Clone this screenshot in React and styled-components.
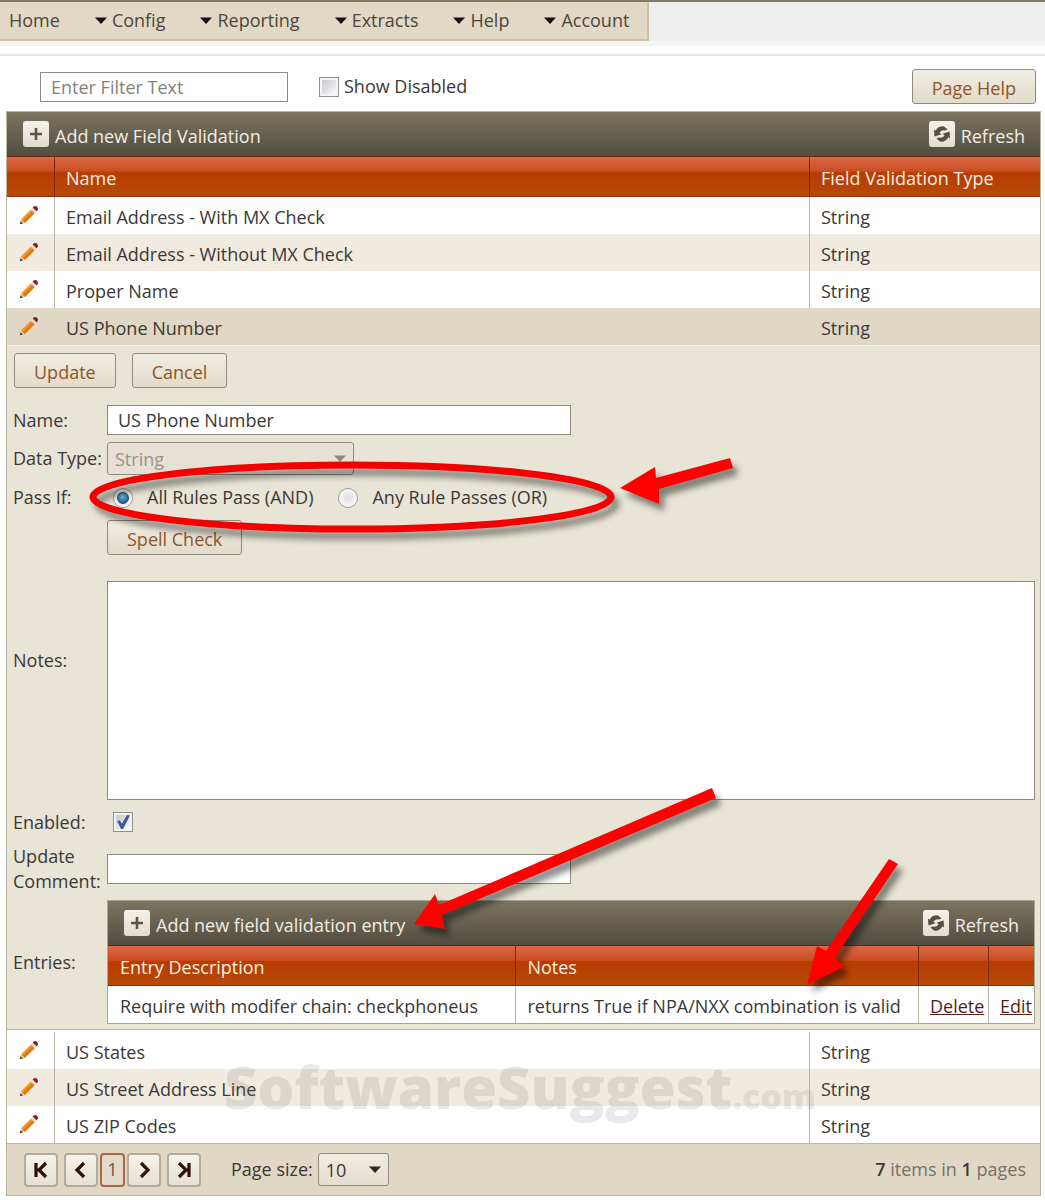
import { useState } from "react";
import styled, { createGlobalStyle } from "styled-components";

const menuItems = ["Home", "Config", "Reporting", "Extracts", "Help", "Account"];

const validations = [
  { id: 1, name: "Email Address - With MX Check", type: "String" },
  { id: 2, name: "Email Address - Without MX Check", type: "String" },
  { id: 3, name: "Proper Name", type: "String" },
  { id: 4, name: "US Phone Number", type: "String" },
  { id: 5, name: "US States", type: "String" },
  { id: 6, name: "US Street Address Line", type: "String" },
  { id: 7, name: "US ZIP Codes", type: "String" },
];

const entries = [
  {
    id: 1,
    description: "Require with modifer chain: checkphoneus",
    notes: "returns True if NPA/NXX combination is valid",
  },
];

const editedId = 4;

const CaretIcon = ({ color = "#111" }) => (
  <svg width="12" height="7" viewBox="0 0 12 7" aria-hidden="true">
    <path d="M0 0.5h12L6 7z" fill={color} />
  </svg>
);

const PencilIcon = () => (
  <svg width="20" height="20" viewBox="0 0 20 20" aria-hidden="true">
    <path d="M0.8 19.2l1.2-5 3.8 3.8z" fill="#e9cfae" />
    <path d="M0.8 19.2l0.8-3.2 2.4 2.4z" fill="#444" />
    <path d="M2 14.2L11.8 4.4l3.8 3.8L5.8 18z" fill="#f39a36" />
    <path d="M3.6 15.8L13.4 6l2.2 2.2L5.8 18z" fill="#e27a10" />
    <path d="M11.8 4.4l1.9-1.9 3.8 3.8-1.9 1.9z" fill="#ecd9d6" />
    <path d="M13.7 2.5l0.9-0.9q1.6-1.4 3.1 0l0.7 0.7q1.4 1.5 0 3.1l-0.9 0.9z" fill="#8f1a26" />
  </svg>
);

const PlusIcon = () => (
  <svg width="14" height="14" viewBox="0 0 14 14" aria-hidden="true">
    <path d="M7 1v12M1 7h12" stroke="#5a5546" strokeWidth="2.6" />
  </svg>
);

const RefreshIcon = () => (
  <svg width="18" height="18" viewBox="0 0 18 18" aria-hidden="true">
    <g fill="#544f42">
      <path d="M1 4.5l1.6 1.2Q5.5 0.6 11 1.4L14.6 4.6 12 5.6Q8.5 4 6.4 7.8L8.4 9.2 1.4 11.4z" />
      <path d="M17 13.5l-1.6-1.2Q12.5 17.4 7 16.6L3.4 13.4 6 12.4Q9.5 14 11.6 10.2L9.6 8.8 16.6 6.6z" />
    </g>
  </svg>
);

const pagerPaths = {
  first: "M4 2v14M14 2L7 9l7 7M4 9h4",
  prev: "M12 2L5 9l7 7",
  next: "M6 2l7 7-7 7",
  last: "M14 2v14M4 2l7 7-7 7M14 9h-4",
};

const PagerIcon = ({ name }) => (
  <svg width="18" height="18" viewBox="0 0 18 18" aria-hidden="true">
    <path d={pagerPaths[name]} fill="none" stroke="#2e1208" strokeWidth="3.2" />
  </svg>
);

const GridToolbar = ({ addLabel }) => (
  <Toolbar>
    <ToolbarButton type="button">
      <IconTile>
        <PlusIcon />
      </IconTile>
      {addLabel}
    </ToolbarButton>
    <ToolbarButton type="button">
      <IconTile>
        <RefreshIcon />
      </IconTile>
      Refresh
    </ToolbarButton>
  </Toolbar>
);

// Red call-outs drawn over the edit form
const Callouts = () => (
  <CalloutLayer width="910" height="684" viewBox="7 346 910 684" aria-hidden="true">
    <ellipse cx="352" cy="497" rx="259" ry="32" fill="none" stroke="#f40000" strokeWidth="7" />
    <g fill="#ff0000">
      <path d="M620 488L655 467 656 478 730 458 733 468 659 489 659 504z" />
      <path d="M414 924L435 894 439 905 712 788 716 798 442 915 445 929z" />
      <path d="M807 985L817 946 826 951 889 859 898 864 835 957 844 967z" />
    </g>
  </CalloutLayer>
);

const EntriesGrid = () => (
  <EntriesFrame>
    <GridToolbar addLabel="Add new field validation entry" />
    <Table>
      <colgroup>
        <col style={{ width: "44%" }} />
        <col />
        <col style={{ width: 70 }} />
        <col style={{ width: 46 }} />
      </colgroup>
      <thead>
        <tr>
          <HeadCell>Entry Description</HeadCell>
          <HeadCell>Notes</HeadCell>
          <HeadCell />
          <HeadCell />
        </tr>
      </thead>
      <tbody>
        {entries.map(({ id, description, notes }) => (
          <Row key={id}>
            <Cell>{description}</Cell>
            <Cell>{notes}</Cell>
            <Cell>
              <RowLink href="#delete">Delete</RowLink>
            </Cell>
            <Cell>
              <RowLink href="#edit">Edit</RowLink>
            </Cell>
          </Row>
        ))}
      </tbody>
    </Table>
  </EntriesFrame>
);

const EditForm = ({ item }) => {
  const [name, setName] = useState(item.name);
  const [passIf, setPassIf] = useState("and");
  const [notes, setNotes] = useState("");
  const [enabled, setEnabled] = useState(true);
  const [comment, setComment] = useState("");

  return (
    <Form onSubmit={(e) => e.preventDefault()}>
      <ButtonRow>
        <Button type="submit">Update</Button>
        <Button type="button">Cancel</Button>
      </ButtonRow>
      <Field $after={7}>
        <label htmlFor="name">Name:</label>
        <TextInput id="name" value={name} onChange={(e) => setName(e.target.value)} />
      </Field>
      <Field>
        <label htmlFor="dataType">Data Type:</label>
        <SelectBox $width={247}>
          <Select id="dataType" disabled defaultValue={item.type}>
            <option>String</option>
          </Select>
          <CaretIcon color="#8f8b80" />
        </SelectBox>
      </Field>
      <Field role="radiogroup" aria-labelledby="passIf" $height={45}>
        <span id="passIf">Pass If:</span>
        <Choices>
          <Choice>
            <Radio name="passIf" checked={passIf === "and"} onChange={() => setPassIf("and")} />
            All Rules Pass (AND)
          </Choice>
          <Choice>
            <Radio name="passIf" checked={passIf === "or"} onChange={() => setPassIf("or")} />
            Any Rule Passes (OR)
          </Choice>
        </Choices>
      </Field>
      <Field>
        <label htmlFor="notes">Notes:</label>
        <NotesBox>
          <Button type="button">Spell Check</Button>
          <TextArea id="notes" value={notes} onChange={(e) => setNotes(e.target.value)} />
        </NotesBox>
      </Field>
      <Field $height={44}>
        <label htmlFor="enabled">Enabled:</label>
        <Choices>
          <Checkbox id="enabled" checked={enabled} onChange={() => setEnabled(!enabled)} />
        </Choices>
      </Field>
      <Field $after={6}>
        <label htmlFor="comment">Update Comment:</label>
        <TextInput id="comment" value={comment} onChange={(e) => setComment(e.target.value)} />
      </Field>
      <Field>
        <span>Entries:</span>
        <EntriesGrid />
      </Field>
      <Callouts />
    </Form>
  );
};

const Pager = () => (
  <PagerBar>
    <PagerGroup>
      <PagerButton type="button" aria-label="First page">
        <PagerIcon name="first" />
      </PagerButton>
      <PageButtons>
        <PagerButton type="button" aria-label="Previous page">
          <PagerIcon name="prev" />
        </PagerButton>
        <PagerButton type="button" $current>
          1
        </PagerButton>
        <PagerButton type="button" aria-label="Next page">
          <PagerIcon name="next" />
        </PagerButton>
      </PageButtons>
      <PagerButton type="button" aria-label="Last page">
        <PagerIcon name="last" />
      </PagerButton>
    </PagerGroup>
    <PageSize>
      <label htmlFor="pageSize">Page size:</label>
      <SelectBox $width={71}>
        <Select id="pageSize" defaultValue="10">
          <option>10</option>
          <option>20</option>
          <option>50</option>
        </Select>
        <CaretIcon color="#2b2620" />
      </SelectBox>
    </PageSize>
    <Summary>
      <b>7</b> items in <b>1</b> pages
    </Summary>
  </PagerBar>
);

const App = () => {
  const [filter, setFilter] = useState("");
  const [showDisabled, setShowDisabled] = useState(false);

  return (
    <>
      <GlobalStyle />
      <TopBar>
        <Menu>
          {menuItems.map((item, i) => (
            <MenuLink key={item} href={`#${item.toLowerCase()}`}>
              {i > 0 && <CaretIcon />}
              {item}
            </MenuLink>
          ))}
        </Menu>
      </TopBar>
      <FilterBar>
        <FilterInput
          aria-label="Filter"
          placeholder="Enter Filter Text"
          value={filter}
          onChange={(e) => setFilter(e.target.value)}
        />
        <FilterChoice>
          <Checkbox checked={showDisabled} onChange={() => setShowDisabled(!showDisabled)} />
          Show Disabled
        </FilterChoice>
        <Button type="button">Page Help</Button>
      </FilterBar>
      <GridFrame>
        <GridToolbar addLabel="Add new Field Validation" />
        <Table>
          <colgroup>
            <col style={{ width: 47 }} />
            <col />
            <col style={{ width: 231 }} />
          </colgroup>
          <thead>
            <tr>
              <HeadCell />
              <HeadCell>Name</HeadCell>
              <HeadCell>Field Validation Type</HeadCell>
            </tr>
          </thead>
          {validations.map((item, i) => (
            <tbody key={item.id}>
              <Row $alt={i % 2 === 1} $selected={item.id === editedId}>
                <Cell>
                  <EditButton type="button" aria-label={`Edit ${item.name}`}>
                    <PencilIcon />
                  </EditButton>
                </Cell>
                <Cell>{item.name}</Cell>
                <Cell>{item.type}</Cell>
              </Row>
              {item.id === editedId && (
                <tr>
                  <FormCell colSpan={3}>
                    <EditForm item={item} />
                  </FormCell>
                </tr>
              )}
            </tbody>
          ))}
        </Table>
        <Pager />
        <Watermark aria-hidden="true">
          SoftwareSuggest<small>.com</small>
        </Watermark>
      </GridFrame>
    </>
  );
};

export default App;

const GlobalStyle = createGlobalStyle`
  *, *::before, *::after {
    box-sizing: border-box;
  }

  body {
    margin: 0;
    background: #fff;
    color: #3b3836;
    font: 18px/25px "Open Sans", "Noto Sans", sans-serif;
  }

  button, input, select, textarea {
    margin: 0;
    color: inherit;
    font: inherit;
  }
`;

const TopBar = styled.header`
  display: flex;
  border-top: 2px solid #827a62;
  border-bottom: 5px solid #f4f4f4;
  background: #eeeeee;
`;

const Menu = styled.nav`
  display: flex;
  gap: 35px;
  height: 39px;
  padding: 0 18px 0 9px;
  border: solid #cfc3a6;
  border-width: 0 2px 2px 0;
  background: #e1d9c6;
`;

const MenuLink = styled.a`
  display: flex;
  align-items: center;
  gap: 5px;
  color: #4d463b;
  text-decoration: none;
`;

const FilterBar = styled.div`
  display: flex;
  align-items: center;
  height: 57px;
  margin-top: 8px;
  padding: 6px 9px 0 40px;
  border-top: 2px solid #e6e6e6;
`;

const FilterChoice = styled.label`
  display: flex;
  flex: 1;
  align-items: center;
  gap: 5px;
  margin-left: 31px;
`;

const TextInput = styled.input`
  width: 464px;
  max-width: 100%;
  height: 30px;
  padding: 0 10px;
  border: 1px solid #8e897e;
  background: #fff;
`;

const FilterInput = styled(TextInput)`
  width: 248px;

  &::placeholder {
    color: #85817b;
    opacity: 1;
  }
`;

const Checkbox = styled.input.attrs({ type: "checkbox" })`
  display: grid;
  place-items: center;
  width: 20px;
  height: 20px;
  border: 1px solid #8e8f8f;
  background: linear-gradient(135deg, #c3c7cd, #fbfbfb) content-box, #f4f4f4;
  padding: 2px;
  appearance: none;

  &:checked::before {
    content: "";
    width: 14px;
    height: 14px;
    background: #3c5a96;
    clip-path: polygon(8% 42%, 28% 38%, 42% 62%, 78% 0, 100% 2%, 50% 100%, 36% 100%);
  }
`;

const Radio = styled.input.attrs({ type: "radio" })`
  display: grid;
  place-items: center;
  width: 20px;
  height: 20px;
  border: 1px solid #9a9a9a;
  border-radius: 50%;
  background: radial-gradient(#e4e4e8 20%, #fafafa 70%);
  appearance: none;

  &:checked::before {
    content: "";
    width: 12px;
    height: 12px;
    border: 1px solid #1d4a6c;
    border-radius: 50%;
    background: radial-gradient(circle at 45% 35%, #6fc4ec, #1f5c8c 75%);
  }
`;

const Button = styled.button`
  height: 35px;
  padding: 4px 19px 0;
  border: 1px solid #918b7e;
  border-radius: 3px;
  background: linear-gradient(#f1ede2, #e2dbca);
  color: #8f5526;
`;

const GridFrame = styled.main`
  position: relative;
  margin: 0 4px 0 6px;
  border: 1px solid #b9b5a2;
`;

const EntriesFrame = styled.div`
  min-width: 0;
  border: 1px solid #a9a593;
`;

const Toolbar = styled.div`
  display: flex;
  justify-content: space-between;
  height: 44px;
  padding: 0 15px 0 16px;
  background: linear-gradient(#7b745f, #534d40);
`;

const ToolbarButton = styled.button`
  display: flex;
  align-items: center;
  gap: 6px;
  padding: 4px 0 0;
  border: 0;
  background: none;
  color: #f1eee6;
`;

const IconTile = styled.span`
  display: grid;
  place-items: center;
  width: 26px;
  height: 26px;
  margin-bottom: 4px;
  border-radius: 3px;
  background: linear-gradient(#f5f2ea, #e2dccd);
`;

const Table = styled.table`
  width: 100%;
  border-spacing: 0;
  table-layout: fixed;
`;

const HeadCell = styled.th`
  height: 41px;
  padding: 4px 0 0 12px;
  border-top: 1px solid #6b2408;
  border-bottom: 1px solid #84330a;
  background: linear-gradient(#dc6847, #c94e22 36%, #b93b02 40%, #b64a08);
  color: #fbeee2;
  font-weight: 400;
  text-align: left;
  white-space: nowrap;

  & + & {
    padding-left: 11px;
    border-left: 1px solid #7c2a06;
  }
`;

const Cell = styled.td`
  height: 37px;
  padding: 4px 0 0 12px;
  white-space: nowrap;

  & + & {
    padding-left: 11px;
    border-left: 1px solid #bcb6a8;
  }
`;

const Row = styled.tr`
  background: ${({ $alt, $selected }) => ($selected ? "#e0d8c5" : $alt ? "#f0eadf" : "#fff")};

  ${Cell} {
    border-color: ${({ $selected }) => $selected && "transparent"};
  }
`;

const RowLink = styled.a`
  color: #5a1c14;
`;

const EditButton = styled.button`
  display: block;
  padding: 0;
  border: 0;
  background: none;
`;

const FormCell = styled.td`
  padding: 0 0 2px;
`;

const Form = styled.form`
  position: relative;
  padding: 7px 5px 5px 6px;
  border-top: 1px solid #f6f2e2;
  border-bottom: 1px solid #bdb9a6;
  background: #e8e4d6;
`;

const ButtonRow = styled.div`
  display: flex;
  gap: 16px;
  margin-bottom: 17px;
  padding-left: 1px;
`;

const Field = styled.div`
  display: grid;
  grid-template-columns: 94px minmax(0, 1fr);
  align-items: center;
  min-height: ${({ $height = 0 }) => $height}px;
  margin-bottom: ${({ $after = 0 }) => $after}px;
`;

const Choices = styled.div`
  display: flex;
  gap: 25px;
  padding-left: 6px;
`;

const Choice = styled.label`
  display: flex;
  align-items: center;
  gap: 14px;
`;

const NotesBox = styled.div`
  display: grid;
  justify-items: start;
  gap: 26px;
`;

const TextArea = styled.textarea`
  display: block;
  width: 100%;
  height: 219px;
  border: 1px solid #8e897e;
  background: #fff;
  resize: none;
`;

const SelectBox = styled.div`
  display: grid;
  align-items: center;
  width: ${({ $width }) => $width}px;

  > * {
    grid-area: 1 / 1;
  }

  > svg {
    justify-self: end;
    margin-right: 8px;
    pointer-events: none;
  }
`;

const Select = styled.select`
  width: 100%;
  height: 33px;
  padding: 2px 7px 0;
  border: 1px solid #918b7e;
  border-radius: 3px;
  background: linear-gradient(#f0ece1, #e4decf);
  appearance: none;

  &:disabled {
    background: #e6e1d4;
    color: #98948b;
    opacity: 1;
  }
`;

const CalloutLayer = styled.svg`
  position: absolute;
  top: 0;
  left: 0;
  filter: drop-shadow(5px 7px 3px rgba(0, 0, 0, 0.45));
  pointer-events: none;
`;

const PagerBar = styled.footer`
  display: flex;
  align-items: center;
  height: 52px;
  padding: 0 14px 0 17px;
  border-top: 1px solid #bdb9a6;
  background: #e0d8c5;
`;

const PagerGroup = styled.div`
  display: flex;
  gap: 6px;
`;

const PageButtons = styled.div`
  display: flex;
  gap: 2px;
`;

const PagerButton = styled.button`
  display: grid;
  place-items: center;
  width: ${({ $current }) => ($current ? 25 : 34)}px;
  height: 34px;
  padding: 0;
  border: 2px solid ${({ $current }) => ($current ? "#a8693f" : "#b3ac9c")};
  border-radius: 4px;
  background: ${({ $current }) => ($current ? "#e3dacb" : "linear-gradient(#f5f2ea, #e6e0d2)")};
  color: #75553f;
`;

const PageSize = styled.div`
  display: flex;
  flex: 1;
  align-items: center;
  gap: 5px;
  margin-left: 30px;
`;

const Summary = styled.span`
  color: #75716a;

  b {
    color: #3b3836;
    font-weight: 600;
  }
`;

const Watermark = styled.div`
  position: absolute;
  bottom: 69px;
  left: 217px;
  color: rgba(110, 110, 110, 0.15);
  font: 800 58px/60px "Open Sans", sans-serif;
  pointer-events: none;

  small {
    font-size: 34px;
  }
`;
